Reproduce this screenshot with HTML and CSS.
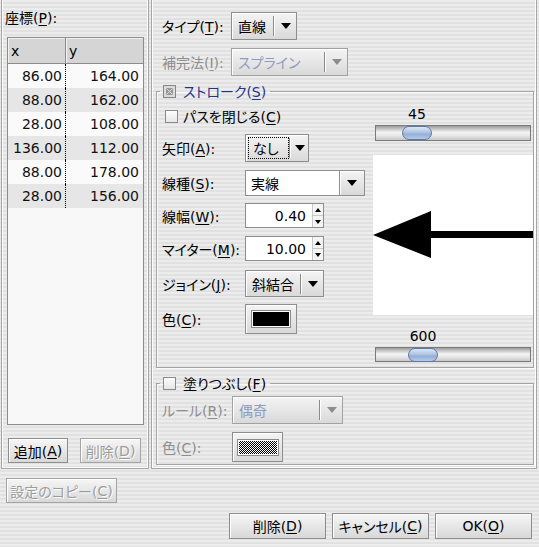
FILE: index.html
```html
<!DOCTYPE html>
<html lang="ja">
<head>
<meta charset="utf-8">
<title>座標</title>
<link rel="stylesheet" href="styles.css">
</head>
<body>
<div class="window">
  <div class="top">
    <section class="left-panel">
      <div class="plabel">座標(<u>P</u>):</div>
      <div class="table-box">
        <table class="coords">
          <colgroup><col class="col-x"><col class="col-y"></colgroup>
          <thead><tr><th class="cx">x</th><th>y</th></tr></thead>
          <tbody>
            <tr class="odd"><td class="cx">86.00</td><td>164.00</td></tr>
            <tr class="even"><td class="cx">88.00</td><td>162.00</td></tr>
            <tr class="odd"><td class="cx">28.00</td><td>108.00</td></tr>
            <tr class="even"><td class="cx">136.00</td><td>112.00</td></tr>
            <tr class="odd"><td class="cx">88.00</td><td>178.00</td></tr>
            <tr class="even"><td class="cx">28.00</td><td>156.00</td></tr>
          </tbody>
        </table>
      </div>
      <div class="list-buttons">
        <button class="btn add">追加(<u>A</u>)</button>
        <button class="btn del disabled">削除(<u>D</u>)</button>
      </div>
    </section>

    <section class="right-panel">
      <div class="form-row top-row">
        <span class="lbl">タイプ(<u>T</u>):</span>
        <div class="combo type-combo"><span class="val">直線</span><span class="sep"></span><span class="arr"><span class="tri"></span></span></div>
      </div>
      <div class="form-row top-row second disabled">
        <span class="lbl">補完法(<u>I</u>):</span>
        <div class="combo interp-combo"><span class="val">スプライン</span><span class="sep"></span><span class="arr"><span class="tri"></span></span></div>
      </div>

      <fieldset class="group stroke">
        <legend><span class="legend-in"><svg class="cbsvg" width="13" height="13" viewBox="0 0 13 13"><rect x="0.5" y="0.5" width="12" height="12" fill="#dadada" stroke="#868686"/><rect x="3" y="3" width="7" height="7" fill="#9a9a9a"/><path d="M3.5 3.5 L9.5 9.5 M9.5 3.5 L3.5 9.5" stroke="#d8d8d8" stroke-width="1"/></svg><span class="lg-text blue">ストローク(<u>S</u>)</span></span></legend>
        <div class="stroke-body">
          <div class="stroke-left">
            <div class="check-row"><span class="cb"></span><span>パスを閉じる(<u>C</u>)</span></div>
            <div class="srow r-arrow">
              <span class="lbl">矢印(<u>A</u>):</span>
              <div class="combo arrow-combo"><span class="val focus">なし</span><span class="sep"></span><span class="arr"><span class="tri"></span></span></div>
            </div>
            <div class="srow r-kind">
              <span class="lbl">線種(<u>S</u>):</span>
              <div class="ecombo"><span class="field">実線</span><span class="ebtn"><span class="tri"></span></span></div>
            </div>
            <div class="srow r-width">
              <span class="lbl">線幅(<u>W</u>):</span>
              <div class="spinner"><span class="field">0.40</span><span class="spin"><span class="up"></span><span class="down"></span></span></div>
            </div>
            <div class="srow r-miter">
              <span class="lbl">マイター(<u>M</u>):</span>
              <div class="spinner"><span class="field">10.00</span><span class="spin"><span class="up"></span><span class="down"></span></span></div>
            </div>
            <div class="srow r-join">
              <span class="lbl">ジョイン(<u>J</u>):</span>
              <div class="combo join-combo"><span class="val">斜結合</span><span class="sep"></span><span class="arr"><span class="tri"></span></span></div>
            </div>
            <div class="srow r-color">
              <span class="lbl">色(<u>C</u>):</span>
              <div class="colorbtn"><span class="swatch black"></span></div>
            </div>
          </div>
          <div class="stroke-right">
            <div class="slider-label"><span class="sl-num" style="margin-left:27px">45</span></div>
            <div class="track"><span class="thumb" style="margin-left:26px"></span></div>
            <div class="preview">
              <svg width="160" height="160" viewBox="0 0 160 160">
                <polygon points="0,80 58,56 58,103" fill="#000"/>
                <rect x="57" y="76" width="103" height="7" fill="#000"/>
              </svg>
            </div>
            <div class="slider-label second"><span class="sl-num" style="margin-left:33px">600</span></div>
            <div class="track"><span class="thumb" style="margin-left:32px"></span></div>
          </div>
        </div>
      </fieldset>

      <fieldset class="group fill">
        <legend><span class="legend-in"><span class="cb"></span><span class="lg-text">塗りつぶし(<u>F</u>)</span></span></legend>
        <div class="fill-body">
          <div class="frow disabled">
            <span class="lbl">ルール(<u>R</u>):</span>
            <div class="combo rule-combo"><span class="val">偶奇</span><span class="sep"></span><span class="arr"><span class="tri"></span></span></div>
          </div>
          <div class="frow second disabled">
            <span class="lbl">色(<u>C</u>):</span>
            <div class="colorbtn fillbtn"><span class="swatch checker"></span></div>
          </div>
        </div>
      </fieldset>
    </section>
  </div>

  <div class="copy-row"><button class="btn disabled copy">設定のコピー(<u>C</u>)</button></div>

  <div class="dialog-buttons">
    <button class="btn dlg">削除(<u>D</u>)</button>
    <button class="btn dlg">キャンセル(<u>C</u>)</button>
    <button class="btn dlg">OK(<u>O</u>)</button>
  </div>
</div>
</body>
</html>
```

FILE: styles.css
```css
* { box-sizing: border-box; }
html, body { margin: 0; padding: 0; }
body {
  width: 539px;
  height: 547px;
  overflow: hidden;
  font-family: "DejaVu Sans", "Noto Sans CJK JP", sans-serif;
  font-size: 14px;
  color: #000;
  font-feature-settings: "palt";
  background: repeating-linear-gradient(to bottom, #ececec 0 2px, #e1e1e1 2px 4px);
}
u { text-decoration: underline; text-underline-offset: 2px; text-decoration-thickness: 1px; }

.top { display: flex; height: 469px; padding-left: 1px; gap: 2px; }

/* ---------- left panel ---------- */
.left-panel {
  width: 148px;
  height: 469px;
  border: 1px solid #a6a6a6;
  border-top: 0;
  box-shadow: inset -1px -1px 0 #fbfbfb, inset 1px 0 0 #fbfbfb;
}
.plabel { margin: 8px 0 0 3px; height: 20px; line-height: 20px; }
.table-box {
  margin: 9px 0 0 5px;
  width: 137px;
  height: 388px;
  border: 1px solid #8c8c8c;
  background: #f8f8f8;
}
.coords { border-collapse: separate; border-spacing: 0; table-layout: fixed; width: 135px; }
.col-x { width: 58px; }
.col-y { width: 77px; }
.coords th {
  height: 26px;
  padding: 0 0 0 3px;
  background: #d5d5d5;
  border-right: 1px solid #8c8c8c;
  border-bottom: 1px solid #8c8c8c;
  box-shadow: inset 1px 1px 0 #f2f2f2;
  text-align: left;
  font-weight: normal;
}
.coords th:last-child { border-right: 0; }
.coords td { height: 24px; padding: 0 4px 0 0; text-align: right; color: #111; }
.coords td.cx { border-right: 1px dotted #000; padding-right: 3px; }
.coords tr.odd td { background: #fafafa; }
.coords tr.even td { background: #e6e6e6; }

.list-buttons { display: flex; gap: 12px; margin: 13px 0 0 6px; }
.btn {
  font: inherit;
  font-feature-settings: "palt";
  color: #000;
  height: 25px;
  padding: 0;
  border: 1px solid #8d8d8d;
  background: linear-gradient(#f6f6f6, #d8d8d8);
  box-shadow: inset 1px 1px 0 #fff;
  display: inline-flex;
  align-items: center;
  justify-content: center;
}
.btn.disabled { color: #9c9c9c; text-shadow: 1px 1px 0 #fff; border-color: #a4a4a4; }
.btn.add { width: 60px; }
.btn.del { width: 61px; }

/* ---------- right panel ---------- */
.right-panel {
  width: 386px;
  height: 469px;
  border: 1px solid #a6a6a6;
  border-top: 0;
  box-shadow: inset -1px -1px 0 #fbfbfb, inset 1px 0 0 #fbfbfb;
  padding: 12px 0 3px 0;
}
.form-row { display: grid; grid-template-columns: 69px auto; align-items: center; height: 28px; padding-left: 10px; }
.form-row.second { margin-top: 8px; }
.disabled .lbl { color: #8e8e8e; }

.combo {
  display: flex;
  align-items: center;
  height: 28px;
  border: 1px solid #8e8e8e;
  background: linear-gradient(#f4f4f4, #d9d9d9);
  box-shadow: inset 1px 1px 0 #fff;
}
.combo .val { flex: 1; padding-left: 6px; white-space: nowrap; }
.combo .sep { width: 2px; height: 20px; border-left: 1px solid #8a8a8a; border-right: 1px solid #fff; }
.combo .arr { width: 21px; display: flex; justify-content: center; align-items: center; }
.tri { width: 0; height: 0; border-left: 5px solid transparent; border-right: 5px solid transparent; border-top: 6px solid #000; }
.disabled .tri { border-top-color: #8c8c8c; }
.disabled .combo .val { color: #8c9cc0; }
.disabled .combo { border-color: #a2a2a2; }

.type-combo { width: 66px; }
.interp-combo { width: 117px; }

/* ---------- groups ---------- */
fieldset.group {
  margin: 5px 2px 0 4px;
  padding: 0;
  border: 1px solid #a3a3a3;
  box-shadow: inset 1px 1px 0 #fbfbfb, 1px 1px 0 #fbfbfb;
  min-inline-size: 0;
}
fieldset.group legend { margin-left: 3px; padding: 0 4px 0 3px; height: 20px; }
.legend-in { display: flex; align-items: center; gap: 7px; height: 20px; }
.cbsvg { display: block; }
.blue { color: #26338c; }
.cb {
  display: inline-block;
  width: 13px; height: 13px;
  border: 1px solid #8a8a8a;
  background: linear-gradient(#fdfdfd, #e6e6e6);
}

.stroke-body {
  display: grid;
  grid-template-columns: 203px 160px;
  column-gap: 8px;
  padding: 5px 0 5px 5px;
}
.check-row { display: flex; align-items: center; gap: 5px; height: 20px; padding-left: 3px; }
.srow { display: grid; grid-template-columns: 83px auto; align-items: center; }
.r-arrow { margin-top: 8px; height: 28px; }
.r-kind { margin-top: 8px; height: 26px; }
.r-width { margin-top: 7px; height: 25px; }
.r-miter { margin-top: 8px; height: 25px; }
.r-join { margin-top: 9px; height: 27px; }
.r-color { margin-top: 7px; height: 30px; }

.arrow-combo { width: 64px; height: 28px; }
.arrow-combo .val { flex: none; width: 41px; height: 22px; margin-left: 2px; padding-left: 4px; border: 1px dotted #000; display: flex; align-items: center; }
.arrow-combo .arr { flex: 1; }
.join-combo { width: 79px; height: 27px; }

.ecombo { display: flex; width: 120px; height: 26px; }
.ecombo .field {
  flex: 1;
  background: #fff;
  border: 1px solid #8e8e8e;
  border-right: 0;
  padding-left: 5px;
  display: flex; align-items: center;
}
.ecombo .ebtn {
  width: 26px;
  border: 1px solid #8e8e8e;
  background: linear-gradient(#f4f4f4, #d9d9d9);
  box-shadow: inset 1px 1px 0 #fff;
  display: flex; align-items: center; justify-content: center;
}

.spinner { display: flex; width: 79px; height: 25px; border: 1px solid #8e8e8e; background: #fff; }
.spinner .field { flex: 1; display: flex; align-items: center; justify-content: flex-end; padding-right: 6px; }
.spinner .spin { width: 11px; display: flex; flex-direction: column; border-left: 1px solid #c8c8c8; background: #f4f4f4; }
.spin .up, .spin .down { flex: 1; display: flex; align-items: center; justify-content: center; }
.spin .up { border-bottom: 1px solid #c8c8c8; }
.spin .up::before { content: ""; border-left: 3px solid transparent; border-right: 3px solid transparent; border-bottom: 4px solid #000; }
.spin .down::before { content: ""; border-left: 3px solid transparent; border-right: 3px solid transparent; border-top: 4px solid #000; }

.colorbtn {
  width: 52px; height: 30px;
  border: 1px solid #8e8e8e;
  background: linear-gradient(#f4f4f4, #d9d9d9);
  box-shadow: inset 1px 1px 0 #fff;
  display: flex; align-items: center; justify-content: center;
}
.swatch { display: block; width: 38px; height: 16px; border: 1px solid #fff; outline: 1px solid #8a8a8a; }
.swatch.black { background: #000; }
.swatch.checker {
  width: 40px; height: 15px;
  background: repeating-conic-gradient(#000 0 25%, #fff 0 50%) 0 0 / 2px 2px;
}

.stroke-right { display: flex; flex-direction: column; }
.slider-label { height: 16px; line-height: 16px; }
.slider-label.second { margin-top: 13px; }
.sl-num { display: inline-block; width: 34px; text-align: center; }
.track {
  margin: 3px 0 0 2px;
  width: 156px; height: 16px;
  border: 1px solid #7a7a7a;
  background: linear-gradient(#9c9c9c, #f4f4f4 45%, #e6e6e6 70%, #c6c6c6);
  display: flex; align-items: center;
}
.slider-label.second + .track { height: 15px; }
.thumb {
  display: block;
  width: 30px; height: 14px;
  border: 1px solid #5a78a8;
  border-radius: 7px;
  background: linear-gradient(#dbe6f5, #aec4e2 45%, #93afd6 60%, #b6cbe8);
}
.preview { margin-top: 14px; width: 160px; height: 160px; background: #fff; }
.preview svg { display: block; }

.fill-body { padding: 3px 0 2px 5px; }
.frow { display: grid; grid-template-columns: 70px auto; align-items: center; height: 28px; }
.frow.second { margin-top: 8px; height: 30px; }
.rule-combo { width: 111px; }
.fillbtn { width: 51px; }

/* ---------- bottom ---------- */
.copy-row { margin-top: 9px; padding-left: 6px; }
.btn.copy { width: 111px; }
.dialog-buttons { display: flex; justify-content: flex-end; gap: 6px; padding-right: 7px; margin-top: 10px; }
.btn.dlg { width: 97px; height: 26px; }
```
